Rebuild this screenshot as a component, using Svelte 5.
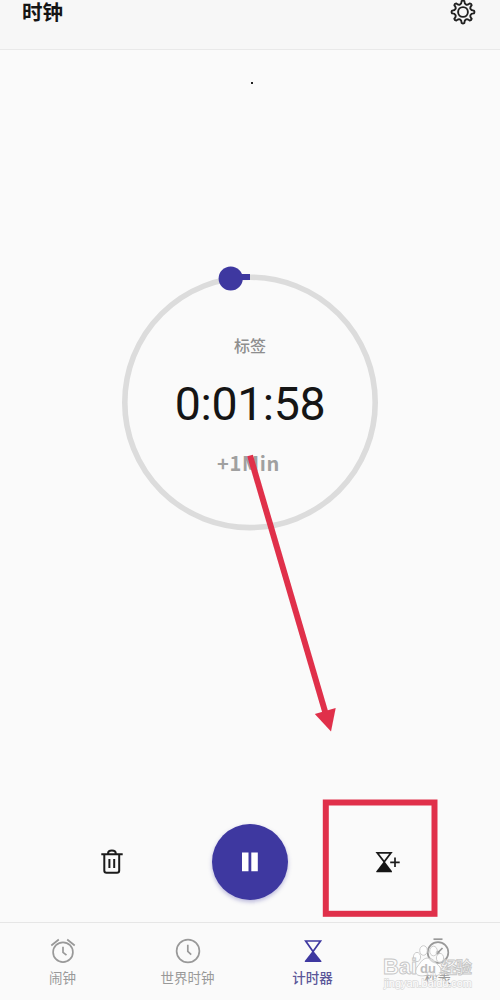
<script>
	const active = 'timer';

	const tabs = [
		{ id: 'alarm', label: '闹钟' },
		{ id: 'world', label: '世界时钟' },
		{ id: 'timer', label: '计时器' },
		{ id: 'stopwatch', label: '秒表' }
	];

	const polar = (r, deg) => {
		const a = (deg * Math.PI) / 180;
		return `${(13 + r * Math.sin(a)).toFixed(2)} ${(13 - r * Math.cos(a)).toFixed(2)}`;
	};

	// eight teeth with a rounded valley between each pair
	let gear = `M${polar(11, -7)}`;
	for (let i = 0; i < 8; i++) {
		const d = i * 45;
		gear += `Q${polar(11.9, d)} ${polar(11, d + 7)}C${polar(7.4, d + 11)} ${polar(7.4, d + 34)} ${polar(11, d + 38)}`;
	}
	gear += 'Z';
</script>

<div class="screen">
	<header>
		<h1>时钟</h1>
		<svg class="gear" width="26" height="26" viewBox="0 0 26 26">
			<path d={gear} />
			<circle cx="13" cy="13" r="4.9" />
		</svg>
	</header>

	<main>
		<div class="dot"></div>
		<div class="dial">
			<svg class="ring" width="260" height="260" viewBox="0 0 260 260">
				<circle class="track" cx="130" cy="130.4" r="125.2" />
				<path class="progress" d="M112 5H130" />
				<circle class="knob" cx="110.7" cy="6.5" r="12.1" />
			</svg>
			<div class="label">标签</div>
			<div class="time">0:01:58</div>
			<div class="plus">+1Min</div>
		</div>

		<div class="controls">
			<button aria-label="删除">
				<svg width="24" height="28" viewBox="0 0 24 28">
					<path class="line" d="M1.3 6.2H22.7M4.3 6.5V22.5Q4.3 24.7 6.5 24.7H17Q19.2 24.7 19.2 22.5V6.5M8 5.8Q8 2.6 11.9 2.6Q15.8 2.6 15.8 5.8M9.4 11V20M14.2 11V20" />
				</svg>
			</button>
			<button class="pause" aria-label="暂停">
				<svg width="18" height="20" viewBox="0 0 18 20">
					<path d="M1 .6H7.5V19.2H1ZM10.3 .6H16.8V19.2H10.3Z" />
				</svg>
			</button>
			<button aria-label="添加计时器">
				<svg width="26" height="24" viewBox="0 0 26 24">
					<path class="line thin" d="M2.2 2.8H16L9.2 11.8Z" />
					<path d="M9.2 11L17 21.3V22.3H1.4V21.3Z" />
					<path class="line thin" d="M15.2 12.3H24.7M20 7.6V17" />
				</svg>
			</button>
		</div>
	</main>

	<nav>
		{#each tabs as tab}
			<div class="tab" class:active={tab.id === active}>
				<svg width="28" height="28" viewBox="0 0 28 28">
					{#if tab.id === 'alarm'}
						<circle cx="14" cy="15.2" r="9.9" />
						<path d="M14 9.8V15.4L17.5 18.2M2.3 8.5L9.8 2.5M25.7 8.5L18.2 2.5" />
					{:else if tab.id === 'world'}
						<circle cx="14" cy="14" r="11.4" />
						<path d="M13.8 7.7V14.3L17.2 17.6" />
					{:else if tab.id === 'timer'}
						<path d="M6.7 4H21.5L14 14.5Z" />
						<path class="solid" d="M14 13.5L22.4 24V25H5.8V24Z" />
					{:else}
						<circle cx="14" cy="15.5" r="10.3" />
						<path d="M9.5 2.2H18.5" />
						<path d="M18.5 11L13.5 16" />
						<circle class="solid" cx="13.6" cy="15.7" r="2" />
					{/if}
				</svg>
				<span>{tab.label}</span>
			</div>
		{/each}
	</nav>

	<svg class="overlay" width="500" height="1000" viewBox="0 0 500 1000">
		<path class="arrow" d="M250 455.5L325.2 712" />
		<path class="head" d="M314.8 714L335.7 708L331 731.5Z" />
		<rect class="arrow" x="325.8" y="802.5" width="108.7" height="111.3" />

		<g class="mark">
			<ellipse cx="417" cy="957" rx="3.6" ry="4.6" />
			<ellipse cx="423.5" cy="950.5" rx="3.8" ry="4.8" />
			<ellipse cx="433.5" cy="951" rx="3.8" ry="4.8" />
			<ellipse cx="440" cy="958" rx="3.6" ry="4.6" />
			<path d="M428 958C422 958 420 964 417 967C412 976 421 977 428 975C435 977 444 976 440 967C436 964 434 958 428 958Z" />
			<text x="383" y="974" font-size="22" textLength="34">Bai</text>
			<text class="du" x="420" y="973" font-size="13">du</text>
			<text x="441" y="973" font-size="16" textLength="31">经验</text>
			<text class="url" x="384" y="986.5" font-size="11" textLength="88">jingyan.baidu.com</text>
		</g>
	</svg>
</div>

<style>
	:global(body) {
		background: #fafafa;
	}
	.screen {
		position: relative;
		display: flex;
		flex-direction: column;
		width: 500px;
		height: 1000px;
		overflow: hidden;
		background: #fafafa;
		color: #151515;
		font-family: Roboto, 'Noto Sans CJK SC', sans-serif;
	}
	header {
		display: flex;
		justify-content: space-between;
		align-items: flex-start;
		box-sizing: border-box;
		height: 50px;
		padding: 0 24px 0 22px;
		border-bottom: 1px solid #e9e9e9;
		background: #f7f7f7;
	}
	h1 {
		margin: 1px 0 0;
		font-size: 20.5px;
		line-height: 25px;
		font-weight: 700;
	}
	svg {
		display: block;
		flex: none;
	}
	.gear {
		margin-top: -1px;
		fill: none;
		stroke: #202020;
		stroke-width: 1.9;
		stroke-linejoin: round;
	}
	main {
		display: flex;
		flex-direction: column;
		align-items: center;
		height: 872px;
	}
	.dot {
		width: 2px;
		height: 2px;
		margin: 32px 0 0 4px;
		background: #222;
	}
	.dial {
		display: flex;
		flex-direction: column;
		align-items: center;
		width: 260px;
		height: 260px;
		margin-top: 188px;
	}
	.ring {
		overflow: visible;
		margin-bottom: -260px;
	}
	.track {
		fill: none;
		stroke: #dcdcdc;
		stroke-width: 5.6;
	}
	.progress {
		stroke: #3e38a0;
		stroke-width: 6;
	}
	.knob {
		fill: #3e38a0;
	}
	.label {
		margin-top: 63px;
		font-size: 16px;
		line-height: 24px;
		font-weight: 500;
		color: #8e8e8e;
	}
	.time {
		margin-top: 17px;
		font-size: 46.5px;
		line-height: 56px;
		letter-spacing: -0.4px;
	}
	.plus {
		margin: 16px 3px 0 0;
		font-family: 'Noto Sans CJK SC', sans-serif;
		font-size: 20px;
		line-height: 30px;
		font-weight: 700;
		letter-spacing: 0.7px;
		color: #a0a0a0;
	}
	.controls {
		display: flex;
		align-items: center;
		justify-content: space-between;
		width: 302px;
		height: 76px;
		margin-top: 292px;
	}
	button {
		display: flex;
		align-items: center;
		justify-content: center;
		width: 26px;
		height: 28px;
		padding: 0;
		border: 0;
		background: none;
		fill: #151515;
	}
	.pause {
		width: 76px;
		height: 76px;
		border-radius: 50%;
		background: #3e38a0;
		box-shadow: 0 2px 4px rgba(62, 56, 160, 0.35);
		fill: #fff;
	}
	.line {
		fill: none;
		stroke: #1b1b1b;
		stroke-width: 2;
	}
	.thin {
		stroke-width: 1.7;
	}
	nav {
		display: grid;
		grid-template-columns: repeat(4, 1fr);
		height: 77px;
		border-top: 1px solid #e6e6e6;
	}
	.tab {
		display: flex;
		flex-direction: column;
		align-items: center;
		padding-top: 14px;
		color: #999;
	}
	.tab svg {
		fill: none;
		stroke: currentColor;
		stroke-width: 1.7;
	}
	.tab .solid {
		fill: currentColor;
		stroke: none;
	}
	.tab span {
		margin-top: 3px;
		font-size: 13.5px;
		line-height: 20px;
	}
	.tab.active {
		color: #3e38a0;
	}
	.active span {
		color: #5b5799;
		font-weight: 500;
	}
	.overlay {
		position: absolute;
		top: 0;
		left: 0;
		pointer-events: none;
	}
	.arrow {
		fill: none;
		stroke: #e0304a;
		stroke-width: 6;
	}
	.head {
		fill: #e0304a;
	}
	.mark {
		fill: rgba(255, 255, 255, 0.6);
		stroke: #c6c6c6;
		stroke-width: 0.9;
		font-family: 'Liberation Sans', 'Noto Sans CJK SC', sans-serif;
		font-weight: 700;
	}
	.du {
		fill: #bdbdbd;
		stroke: none;
	}
	.url {
		stroke: #dadada;
		stroke-width: 1.4;
		paint-order: stroke;
		fill: #fff;
		font-weight: 400;
	}
</style>
